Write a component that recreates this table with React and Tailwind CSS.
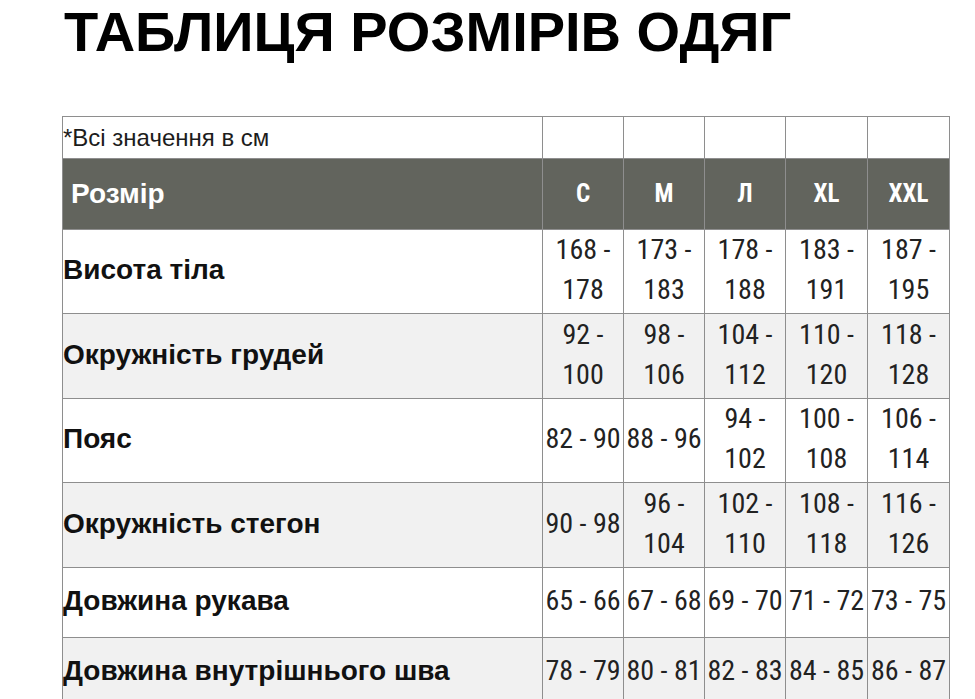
import React from 'react';

const sizes = ['С', 'М', 'Л', 'XL', 'XXL'];

const rows = [
  { label: 'Висота тіла', h: 'h-[84px]', alt: false, vals: [['168 -', '178'], ['173 -', '183'], ['178 -', '188'], ['183 -', '191'], ['187 -', '195']] },
  { label: 'Окружність грудей', h: 'h-[85px]', alt: true, vals: [['92 -', '100'], ['98 -', '106'], ['104 -', '112'], ['110 -', '120'], ['118 -', '128']] },
  { label: 'Пояс', h: 'h-[84px]', alt: false, vals: [['82 - 90'], ['88 - 96'], ['94 -', '102'], ['100 -', '108'], ['106 -', '114']] },
  { label: 'Окружність стегон', h: 'h-[85px]', alt: true, vals: [['90 - 98'], ['96 -', '104'], ['102 -', '110'], ['108 -', '118'], ['116 -', '126']] },
  { label: 'Довжина рукава', h: 'h-[70px]', alt: false, vals: [['65 - 66'], ['67 - 68'], ['69 - 70'], ['71 - 72'], ['73 - 75']] },
  { label: 'Довжина внутрішнього шва', h: 'h-[70px]', alt: true, vals: [['78 - 79'], ['80 - 81'], ['82 - 83'], ['84 - 85'], ['86 - 87']] },
];

const arial = "font-['Liberation_Sans',Arial,sans-serif]";
const narrow = "font-['Roboto_Condensed','Liberation_Sans_Narrow','DejaVu_Sans_Condensed',sans-serif]";

export default function App() {
  return (
    <div className="min-h-screen w-[975px] bg-white overflow-hidden">
      {/* Title */}
      <h1 className={`${arial} pl-[64px] text-[56px] leading-[63px] font-bold text-black`}>
        ТАБЛИЦЯ РОЗМІРІВ ОДЯГ
      </h1>

      {/* Table */}
      <div className="pl-[62px] pt-[53px]">
        <table className="table-fixed border-collapse w-[888px]">
          <colgroup>
            <col className="w-[480px]" />
            <col className="w-[81px]" />
            <col className="w-[81px]" />
            <col className="w-[81px]" />
            <col className="w-[82px]" />
            <col className="w-[82px]" />
          </colgroup>
          <tbody>
            <tr className="h-[42px]">
              <td className={`${arial} border border-[#8e8e8e] p-0 text-[24px] leading-none text-[#1c1c1c]`}>
                *Всі значення в см
              </td>
              {sizes.map((s) => (
                <td key={s} className="border border-[#8e8e8e]" />
              ))}
            </tr>
            <tr className="h-[71px] bg-[#62645d]">
              <td className={`${arial} border border-[#8e8e8e] pl-2 text-[28px] font-bold text-white`}>
                Розмір
              </td>
              {sizes.map((s) => (
                <td key={s} className={`${narrow} border border-[#8e8e8e] text-center text-[25px] font-bold text-white`}>
                  {s}
                </td>
              ))}
            </tr>
            {rows.map((r) => (
              <tr key={r.label} className={`${r.h} ${r.alt ? 'bg-[#f1f1f1]' : 'bg-white'}`}>
                <td className={`${arial} border border-[#8e8e8e] p-0 pb-[3px] text-[28px] leading-[34px] font-bold text-[#111]`}>
                  {r.label}
                </td>
                {r.vals.map((v, i) => (
                  <td key={i} className={`${narrow} border border-[#8e8e8e] px-0 pt-0 pb-[3px] text-center text-[28px] leading-[40px] text-[#222] whitespace-nowrap`}>
                    {v.map((line, j) => (
                      <div key={j}>{line}</div>
                    ))}
                  </td>
                ))}
              </tr>
            ))}
          </tbody>
        </table>
      </div>
    </div>
  );
}
